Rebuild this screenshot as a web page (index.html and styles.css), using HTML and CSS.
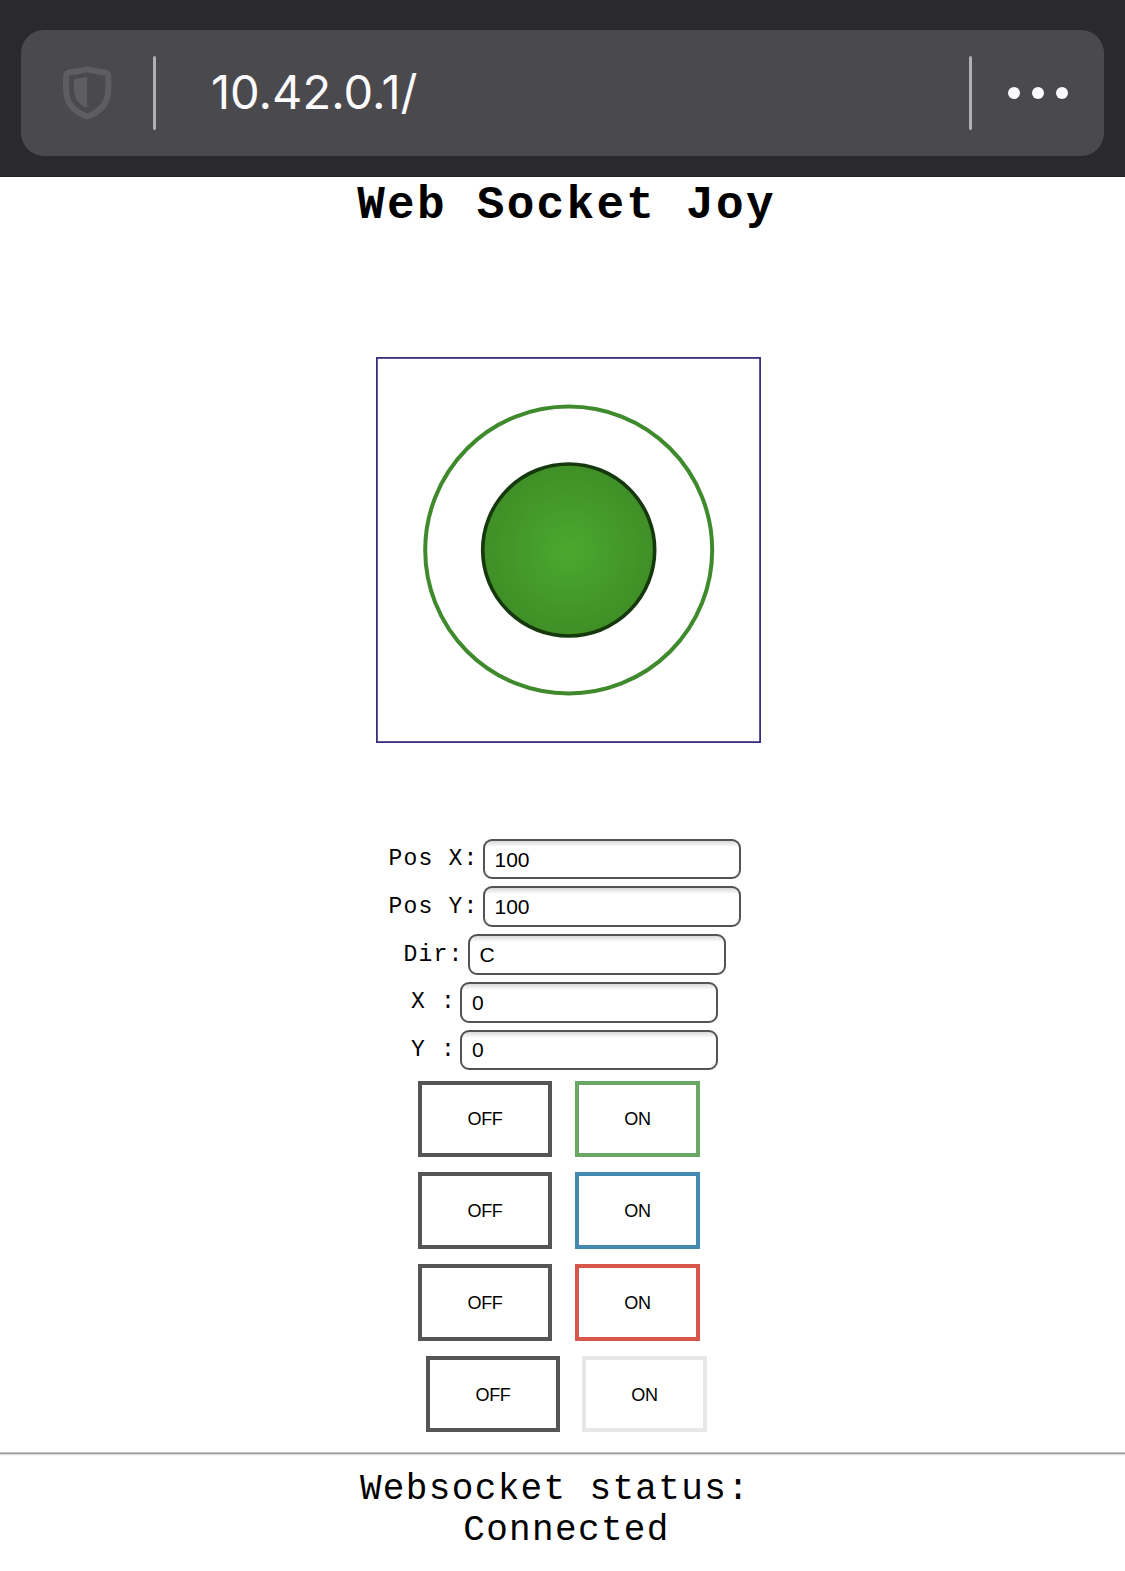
FILE: index.html
```html
<!DOCTYPE html>
<html lang="en">
<head>
<meta charset="utf-8">
<title>Web Socket Joy</title>
<link rel="stylesheet" href="styles.css">
</head>
<body>
<header class="browser">
  <div class="address-bar">
    <svg class="shield" width="50" height="54" viewBox="0 0 50 54">
      <path class="shield-outline" d="M25.200 3.400Q34.500 5.600 43 6.500Q46.300 7 46.300 10.500V23C46.300 37 38.500 46 25.200 50.500C12 46 4 37 4 23V10.500Q4 7 7.300 6.500Q16 5.600 25.200 3.400Z"/>
      <path class="shield-half" d="M25.200 11L12 13V23C12 32 16.500 39 25.200 42Z"/>
    </svg>
    <span class="divider"></span>
    <span class="url">10.42.0.1/</span>
    <span class="divider"></span>
    <svg class="dots" width="60" height="12" viewBox="0 0 60 12">
      <circle cx="6" cy="6" r="6"/><circle cx="30" cy="6" r="6"/><circle cx="54" cy="6" r="6"/>
    </svg>
  </div>
</header>
<main class="page">
  <h1 class="title">Web Socket Joy</h1>
  <svg class="joystick" width="385" height="386" viewBox="0 0 385 386">
    <defs>
      <radialGradient id="knob">
        <stop offset="0" stop-color="#4ba82e"/>
        <stop offset="1" stop-color="#3f8f26"/>
      </radialGradient>
    </defs>
    <rect class="frame" x="0.900" y="0.900" width="383.200" height="384.200"/>
    <circle class="ring" cx="192.700" cy="193" r="143.500"/>
    <circle class="knob" cx="192.700" cy="193" r="86" fill="url(#knob)"/>
  </svg>
  <form class="fields">
    <label class="field">Pos X:<input class="value" type="text" value="100"></label>
    <label class="field">Pos Y:<input class="value" type="text" value="100"></label>
    <label class="field">Dir:<input class="value" type="text" value="C"></label>
    <label class="field">X :<input class="value" type="text" value="0"></label>
    <label class="field">Y :<input class="value" type="text" value="0"></label>
  </form>
  <div class="switches">
    <div class="switch"><button class="btn off">OFF</button><button class="btn on green">ON</button></div>
    <div class="switch"><button class="btn off">OFF</button><button class="btn on blue">ON</button></div>
    <div class="switch"><button class="btn off">OFF</button><button class="btn on red">ON</button></div>
    <div class="switch last"><button class="btn off">OFF</button><button class="btn on pale">ON</button></div>
  </div>
  <hr class="rule">
  <div class="status">Websocket status:&nbsp;<br>Connected</div>
</main>
</body>
</html>
```
FILE: styles.css
```css
* {
  box-sizing: border-box;
}

body {
  margin: 0;
  background: #fff;
  color: #000;
  font-family: "Liberation Mono", monospace;
}

.browser {
  height: 177px;
  padding: 30px 21px 0;
  background: #2a292e;
  border-bottom: 1px solid #202024;
}

.address-bar {
  display: flex;
  align-items: center;
  height: 126px;
  padding: 0 36px 0 41px;
  border-radius: 23px;
  background: #4a494d;
}

.shield {
  margin-right: 41px;
}

.shield-outline {
  fill: none;
  stroke: #5e5d62;
  stroke-width: 6;
}

.shield-half {
  fill: #5e5d62;
}

.divider {
  width: 3px;
  height: 74px;
  border-radius: 2px;
  background: #b0afb4;
}

.url {
  flex: 1;
  padding: 0 0 3px 55px;
  color: #fbfbfe;
  font: 47px/60px Inter, sans-serif;
}

.dots {
  margin-left: 36px;
  fill: #fbfbfe;
}

.page {
  display: flex;
  flex-direction: column;
  align-items: center;
}

.title {
  margin: 0 0 121px 8px;
  font-size: 46px;
  line-height: 59px;
  letter-spacing: 2.300px;
}

.joystick {
  margin-left: 12px;
}

.frame {
  fill: none;
  stroke: #3d2b80;
  stroke-width: 1.800;
}

.ring {
  fill: none;
  stroke: #3f8a2d;
  stroke-width: 4;
}

.knob {
  stroke: #16380d;
  stroke-width: 3.600;
}

.fields {
  display: flex;
  flex-direction: column;
  align-items: center;
  gap: 7px;
  margin: 95.800px 0 0 4px;
}

.field {
  display: flex;
  align-items: center;
  height: 40.700px;
  font-size: 23px;
  letter-spacing: 1.200px;
  white-space: pre;
}

.value {
  width: 258px;
  height: 40.700px;
  margin-left: 4px;
  padding: 1px 11px 0 10px;
  border: 2px solid #545256;
  border-radius: 9px;
  background: #fff linear-gradient(#d8d8d8, #fff 6px);
  font: 21px "Liberation Sans", sans-serif;
}

.switches {
  display: flex;
  flex-direction: column;
  align-items: center;
  gap: 15.200px;
  margin-top: 10.500px;
}

.switch {
  display: flex;
  gap: 23px;
  margin-right: 7px;
}

.switch.last {
  gap: 22px;
  margin: 0 0 0 8px;
}

.btn {
  height: 76.500px;
  padding: 2px 0 0;
  border: 4px solid #555;
  border-radius: 0;
  background: #fff;
  color: #000;
  font: 18px "Liberation Sans", sans-serif;
  letter-spacing: -0.300px;
}

.off {
  width: 134px;
}

.on {
  width: 125px;
}

.green {
  border-color: #6aa764;
}

.blue {
  border-color: #4489b0;
}

.red {
  border-color: #d6574a;
}

.pale {
  border-color: #e7e7e7;
}

.rule {
  align-self: stretch;
  height: 4px;
  margin: 20px 0 0;
  border: 0;
  background: linear-gradient(#c8c8c8 1px, #989898 1px 2px, #e2e2e2 2px 3px, #f6f6f6 3px);
}

.status {
  margin: 13px 0 0 8px;
  font-size: 36px;
  line-height: 41px;
  letter-spacing: 1.350px;
  text-align: center;
}
```
